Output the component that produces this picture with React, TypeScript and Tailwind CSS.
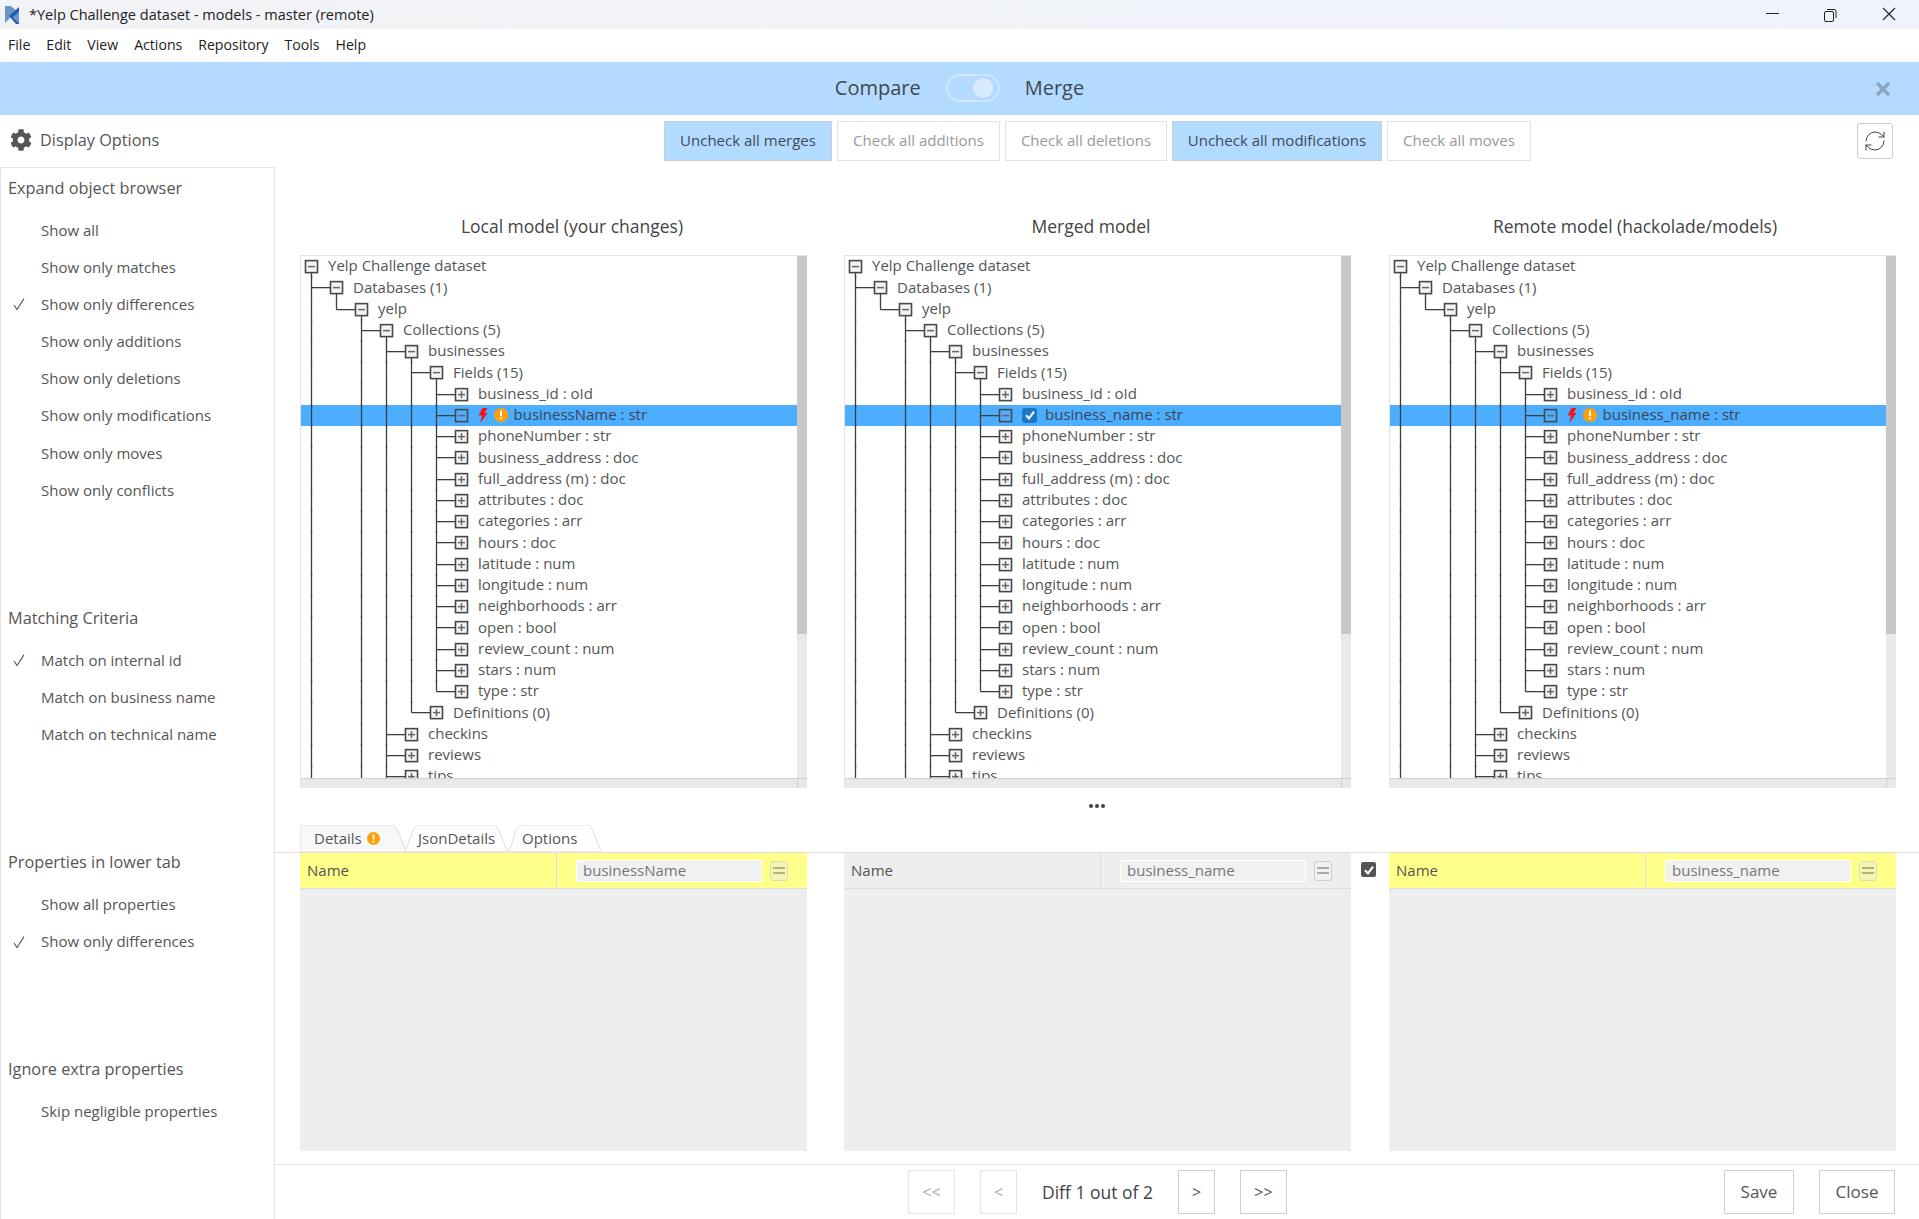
import { RefreshCw } from "lucide-react";
import { FaCog } from "react-icons/fa";

type Row = { d: number; t: string; plus?: boolean; active?: boolean };

const fieldsA = [
  "phoneNumber : str",
  "business_address : doc",
  "full_address (m) : doc",
  "attributes : doc",
  "categories : arr",
  "hours : doc",
  "latitude : num",
  "longitude : num",
  "neighborhoods : arr",
  "open : bool",
  "review_count : num",
  "stars : num",
  "type : str",
];

function makeRows(activeName: string): Row[] {
  return [
    { d: 0, t: "Yelp Challenge dataset" },
    { d: 1, t: "Databases (1)" },
    { d: 2, t: "yelp" },
    { d: 3, t: "Collections (5)" },
    { d: 4, t: "businesses" },
    { d: 5, t: "Fields (15)" },
    { d: 6, t: "business_id : oId", plus: true },
    { d: 6, t: activeName, active: true },
    ...fieldsA.map((t) => ({ d: 6, t, plus: true })),
    { d: 5, t: "Definitions (0)", plus: true },
    { d: 4, t: "checkins", plus: true },
    { d: 4, t: "reviews", plus: true },
    { d: 4, t: "tips", plus: true },
  ];
}

const spans: [number, number, number][] = [
  [0, 0, 999],
  [1, 1, 2],
  [2, 2, 999],
  [3, 3, 999],
  [4, 4, 21],
  [5, 5, 20],
];

const RH = 21.25;

function TreeGraphic({ row, index }: { row: Row; index: number }) {
  const w = 25 * row.d + 27;
  const mid = RH / 2;
  const cx = 10.5 + 25 * row.d;
  const lines = spans
    .filter(([, s, e]) => index >= s && index <= e)
    .map(([c, s, e]) => ({
      x: 10.5 + 25 * c,
      y1: index === s ? mid : -1,
      y2: index === e ? mid : RH + 1,
    }));
  return (
    <svg width={w} height={RH} className="shrink-0 overflow-visible">
      {lines.map((l, i) => (
        <line key={i} x1={l.x} x2={l.x} y1={l.y1} y2={l.y2} stroke="#3d3d3d" strokeWidth="1.3" />
      ))}
      {row.d > 0 && <line x1={cx - 25} x2={cx} y1={mid} y2={mid} stroke="#3d3d3d" strokeWidth="1.3" />}
      <rect
        x={cx - 6}
        y={mid - 6}
        width="12"
        height="12"
        fill={row.active ? "#4dadff" : "#f4f4f4"}
        stroke="#484848"
        strokeWidth="1.6"
      />
      <line x1={cx - 3.5} x2={cx + 3.5} y1={mid} y2={mid} stroke="#666" strokeWidth="1.5" />
      {row.plus && <line x1={cx} x2={cx} y1={mid - 3.5} y2={mid + 3.5} stroke="#666" strokeWidth="1.5" />}
    </svg>
  );
}

function Warn({ size = 14 }: { size?: number }) {
  return (
    <svg width={size} height={size} viewBox="0 0 14 14" className="shrink-0">
      <circle cx="7" cy="7" r="7" fill="#ff9f0a" />
      <rect x="6" y="2.6" width="2" height="5.6" rx="0.8" fill="#fff" />
      <circle cx="7" cy="10.3" r="1.15" fill="#fff" />
    </svg>
  );
}

function Bolt() {
  return (
    <svg width="10" height="15" viewBox="0 0 10 15" className="shrink-0">
      <path d="M4.5 0 L9.5 0 L6.4 5 L9.6 5 L2.2 15 L4 7.6 L0.6 7.6 Z" fill="#f5141c" />
    </svg>
  );
}

function CheckMark({ bg, size = 15 }: { bg: "blue" | "gray"; size?: number }) {
  return (
    <span
      className={
        bg === "blue"
          ? "flex size-[15px] shrink-0 items-center justify-center rounded-[3px] bg-[#1a78c6]"
          : "flex size-[15px] shrink-0 items-center justify-center rounded-[2px] bg-[#555555]"
      }
    >
      <svg width={size - 3} height={size - 3} viewBox="0 0 12 12">
        <path d="M2 6.2 L5 9.4 L10 2.6" fill="none" stroke="#fff" strokeWidth="2.1" />
      </svg>
    </span>
  );
}

function TreePanel({ activeName, mode, col }: { activeName: string; mode: "warn" | "check"; col: string }) {
  const rows = makeRows(activeName);
  return (
    <div className={["flex h-[533px] flex-col border-t border-l border-[#e4e4e4] bg-white", col].join(" ")}>
      <div className="flex min-h-0 flex-1">
        <div className="min-w-0 flex-1 overflow-hidden">
          {rows.map((r, i) => (
            <div
              key={i}
              className={
                r.active
                  ? "flex h-[21.25px] items-center bg-[#4dadff] text-[15px] whitespace-nowrap text-[#3c4654]"
                  : "flex h-[21.25px] items-center text-[15px] whitespace-nowrap text-[#555555]"
              }
            >
              <TreeGraphic row={r} index={i} />
              {r.active && mode === "warn" && (
                <span className="mr-[5.5px] flex items-center gap-[6px]">
                  <Bolt />
                  <Warn />
                </span>
              )}
              {r.active && mode === "check" && (
                <span className="mr-[8px]">
                  <CheckMark bg="blue" />
                </span>
              )}
              <span className="-translate-y-[1.5px]">{r.t}</span>
            </div>
          ))}
        </div>
        <div className="flex w-[10px] shrink-0 flex-col bg-[#e9e9e9]">
          <div className="h-[378px] bg-[#c8c8c8]" />
        </div>
      </div>
      <div className="flex h-[10px] shrink-0 border-t border-[#d0d0d0] bg-[#e9e9e9]">
        <div className="flex-1" />
        <div className="w-[10px] border-l border-[#d0d0d0]" />
      </div>
    </div>
  );
}

function DetailCell({ value, yellow }: { value: string; yellow: boolean }) {
  return (
    <div className="flex h-[298px] flex-col bg-[#eeeeee]">
      <div
        className={
          yellow
            ? "flex h-[36px] shrink-0 items-center border-b border-[#dedede] bg-[#ffff8a] text-[15px] text-[#555555]"
            : "flex h-[36px] shrink-0 items-center border-b border-[#dedede] bg-[#eeeeee] text-[15px] text-[#555555]"
        }
      >
        <div className="flex h-full w-[257px] shrink-0 items-center border-r border-[#dedede] pl-[7px]">Name</div>
        <div className="ml-[19px] flex h-[22px] w-[186px] items-center border border-white bg-[#f1f1f1] pl-[6px] text-[#777777]">
          {value}
        </div>
        <div
          className={
            yellow
              ? "ml-[8px] flex h-[20px] w-[18px] flex-col items-center justify-center gap-[3px] rounded-[3px] border border-[#dcdcb0] bg-[#f4f4b4]"
              : "ml-[8px] flex h-[20px] w-[18px] flex-col items-center justify-center gap-[3px] rounded-[3px] border border-[#cccccc] bg-[#f1f1f1]"
          }
        >
          <span className={yellow ? "h-[2px] w-[12px] bg-[#b4b47c]" : "h-[2px] w-[12px] bg-[#aaaaaa]"} />
          <span className={yellow ? "h-[2px] w-[12px] bg-[#b4b47c]" : "h-[2px] w-[12px] bg-[#aaaaaa]"} />
        </div>
      </div>
    </div>
  );
}

function TopBtn({ label, on, w }: { label: string; on?: boolean; w: string }) {
  return (
    <div
      className={[
        "flex h-[40px] items-center justify-center border pb-[1px] text-[15px] whitespace-nowrap",
        w,
        on ? "border-[#c4ced6] bg-[#b3dbff] text-[#3f4a54]" : "border-[#e2e2e2] bg-white text-[#999999]",
      ].join(" ")}
    >
      {label}
    </div>
  );
}

function NavBtn({ label, w, on }: { label: string; w: string; on?: boolean }) {
  return (
    <div
      className={[
        "flex h-[44px] items-center justify-center border text-[16px]",
        w,
        on ? "border-[#cfcfcf] text-[#555555]" : "border-[#e6e6e6] text-[#aaaaaa]",
      ].join(" ")}
    >
      {label}
    </div>
  );
}

function Group({ title, items, checked }: { title: string; items: string[]; checked: number }) {
  return (
    <div className="mb-[89.5px]">
      <div className="mb-[3.5px] flex h-[40px] items-center pl-[7px] text-[16.3px] text-[#555555]">{title}</div>
      {items.map((t, i) => (
        <div key={t} className="flex h-[37.14px] items-center text-[15px] text-[#555555]">
          <span className="flex w-[40px] shrink-0 justify-center">
            {i === checked && (
              <svg width="14" height="14" viewBox="0 0 14 14" className="mr-[5px]">
                <path d="M2 8 L5 12.6 L12 1.6" fill="none" stroke="#555" strokeWidth="1.1" />
              </svg>
            )}
          </span>
          {t}
        </div>
      ))}
    </div>
  );
}

function Tab({ w, fill, first, children }: { w: string; fill: string; first?: boolean; children: React.ReactNode }) {
  return (
    <div className={["relative flex h-[27px] items-center text-[15px] text-[#555555]", w].join(" ")}>
      <svg className="absolute inset-0 h-full w-full" viewBox="0 0 100 27" preserveAspectRatio="none">
        <path
          d={first ? "M0 27 L0 0 L86 0 C92 4 94 20 100 27 Z" : "M0 27 C6 20 6 2 14 0 L86 0 C92 4 94 20 100 27 Z"}
          fill={fill}
          stroke="#dcdcdc"
          strokeWidth="1"
          vectorEffect="non-scaling-stroke"
        />
      </svg>
      <span className="relative flex items-center gap-[5px]">{children}</span>
    </div>
  );
}

export default function App() {
  return (
    <div className="flex h-[1219px] w-full flex-col overflow-hidden bg-white font-['Open_Sans','Noto_Sans',sans-serif]">
      {/* title bar */}
      <div className="flex h-[29px] shrink-0 items-center bg-gradient-to-r from-[#f2f3f6] to-[#eff3fb] text-[14.5px] text-[#222222]">
        <svg width="16" height="18" viewBox="0 0 16 18" className="ml-[4px] shrink-0">
          <path d="M1 0 L7 0 L15 7 L15 17 L8 10 L1 17 Z" fill="#6f95c4" />
          <path d="M5 10 L15 1 L15 6 L9 11 L15 17 L15 18 L12 18 Z" fill="#1f5fb4" />
        </svg>
        <span className="ml-[9px] whitespace-nowrap">*Yelp Challenge dataset - models - master (remote)</span>
        <div className="ml-auto flex items-center">
          <svg width="130" height="16" viewBox="0 0 130 16" className="mr-[23px]">
            <line x1="0" x2="13" y1="6.5" y2="6.5" stroke="#222" strokeWidth="1" />
            <rect x="58.5" y="4.5" width="9" height="10" rx="1.5" fill="none" stroke="#222" />
            <path d="M61 2.5 L68 2.5 Q70 2.5 70 4.5 L70 11" fill="none" stroke="#222" />
            <path d="M117 1 L129 13 M129 1 L117 13" stroke="#222" strokeWidth="1.1" />
          </svg>
        </div>
      </div>

      {/* menu */}
      <div className="flex h-[33px] shrink-0 items-center gap-[16px] bg-white pb-[2px] pl-[8px] text-[14.1px] text-[#222222]">
        {["File", "Edit", "View", "Actions", "Repository", "Tools", "Help"].map((m) => (
          <span key={m}>{m}</span>
        ))}
      </div>

      {/* banner */}
      <div className="grid h-[53px] shrink-0 grid-cols-[1fr_auto_1fr] items-center bg-[#b3dbff]">
        <div />
        <div className="flex items-center pb-[1px] text-[20px] text-[#3f4750]">
          <span>Compare</span>
          <span className="mx-[25px] flex h-[28px] w-[54px] items-center justify-end rounded-full border-2 border-[#cde5fd] pr-[5px]">
            <span className="size-[20px] rounded-full bg-[#d7eafe]" />
          </span>
          <span>Merge</span>
        </div>
        <div className="flex justify-end pr-[28px]">
          <svg width="16" height="16" viewBox="0 0 16 16">
            <path d="M2 2 L14 14 M14 2 L2 14" stroke="#8ba7c0" strokeWidth="3.4" />
          </svg>
        </div>
      </div>

      {/* toolbar */}
      <div className="flex h-[52px] shrink-0 items-center">
        <div className="flex w-[664px] shrink-0 items-center pb-[2px] pl-[10px] text-[16.3px] text-[#555555]">
          <FaCog size={22} color="#555555" />
          <span className="ml-[8px]">Display Options</span>
        </div>
        <div className="flex items-center gap-[5px]">
          <TopBtn label="Uncheck all merges" on w="w-[168px]" />
          <TopBtn label="Check all additions" w="w-[163px]" />
          <TopBtn label="Check all deletions" w="w-[162px]" />
          <TopBtn label="Uncheck all modifications" on w="w-[210px]" />
          <TopBtn label="Check all moves" w="w-[144px]" />
        </div>
        <div className="mr-[26px] ml-auto flex h-[36px] w-[36px] items-center justify-center rounded-[3px] border border-[#cccccc]">
          <RefreshCw size={24} strokeWidth={1} color="#444444" />
        </div>
      </div>

      {/* body */}
      <div className="flex min-h-0 flex-1">
        <aside className="w-[275px] shrink-0 border-t border-r border-l border-[#e4e4e4]">
          <Group
            title="Expand object browser"
            checked={2}
            items={[
              "Show all",
              "Show only matches",
              "Show only differences",
              "Show only additions",
              "Show only deletions",
              "Show only modifications",
              "Show only moves",
              "Show only conflicts",
            ]}
          />
          <Group
            title="Matching Criteria"
            checked={0}
            items={["Match on internal id", "Match on business name", "Match on technical name"]}
          />
          <Group title="Properties in lower tab" checked={1} items={["Show all properties", "Show only differences"]} />
          <Group title="Ignore extra properties" checked={-1} items={["Skip negligible properties"]} />
        </aside>

        <main className="flex min-w-0 flex-1 flex-col">
          <div className="grid h-[88px] shrink-0 grid-cols-[507px_37px_507px_38px_507px] items-end pb-[15.5px] pl-[25px] text-center text-[17.5px] text-[#444444]">
            <div className="col-start-1 pl-[37px]">Local model (your changes)</div>
            <div className="col-start-3 pr-[13px]">Merged model</div>
            <div className="col-start-5 pr-[15px]">Remote model (hackolade/models)</div>
          </div>

          <div className="grid shrink-0 grid-cols-[507px_37px_507px_38px_507px] pl-[25px]">
            <TreePanel activeName="businessName : str" mode="warn" col="col-start-1" />
            <TreePanel activeName="business_name : str" mode="check" col="col-start-3" />
            <TreePanel activeName="business_name : str" mode="warn" col="col-start-5" />
          </div>

          <div className="flex h-[37px] shrink-0 items-center justify-center gap-[2px] pb-[2px]">
            <span className="size-[4px] rounded-full bg-[#444444]" />
            <span className="size-[4px] rounded-full bg-[#444444]" />
            <span className="size-[4px] rounded-full bg-[#444444]" />
          </div>

          <div className="flex h-[27px] shrink-0 pl-[25px]">
            <Tab w="w-[108px] pl-[14px]" fill="#f8f8f8" first>
              Details <Warn size={13} />
            </Tab>
            <Tab w="w-[105px] -ml-[4px] pl-[14px]" fill="#ffffff">
              JsonDetails
            </Tab>
            <Tab w="w-[94px] -ml-[1px] pl-[14px]" fill="#ffffff">
              Options
            </Tab>
          </div>

          <div className="grid shrink-0 grid-cols-[507px_37px_507px_38px_507px] border-t border-[#dedede] pl-[25px]">
            <DetailCell value="businessName" yellow />
            <div />
            <DetailCell value="business_name" yellow={false} />
            <div className="pt-[9px] pl-[10px]">
              <CheckMark bg="gray" />
            </div>
            <DetailCell value="business_name" yellow />
          </div>

          <div className="mt-[13px] flex h-[55px] shrink-0 items-center border-t border-[#e4e4e4] pr-[24px] pl-[633px] text-[17px] text-[#555555]">
            <NavBtn label="<<" w="w-[47px]" />
            <div className="w-[25px]" />
            <NavBtn label="<" w="w-[37px]" />
            <div className="flex w-[161px] justify-center text-[17.5px] whitespace-nowrap text-[#444444]">Diff 1 out of 2</div>
            <NavBtn label=">" w="w-[37px]" on />
            <div className="w-[25px]" />
            <NavBtn label=">>" w="w-[47px]" on />
            <div className="ml-auto">
              <div className="flex h-[44px] w-[70px] items-center justify-center border border-[#cfcfcf]">Save</div>
            </div>
            <div className="ml-[25px] flex h-[44px] w-[76px] items-center justify-center border border-[#cfcfcf]">Close</div>
          </div>
        </main>
      </div>
    </div>
  );
}
